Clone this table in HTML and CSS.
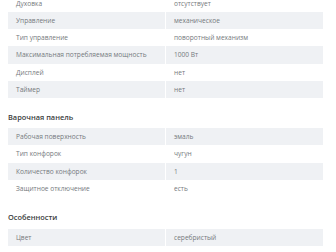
FILE: index.html
```html
<!DOCTYPE html>
<html lang="ru">
<head>
<meta charset="utf-8">
<link rel="stylesheet" href="styles.css">
</head>
<body>
<div class="page">
  <div class="table">
    <div class="row"><div class="k">Духовка</div><div class="v">отсутствует</div></div>
    <div class="row alt"><div class="k">Управление</div><div class="v">механическое</div></div>
    <div class="row"><div class="k">Тип управление</div><div class="v">поворотный механизм</div></div>
    <div class="row alt"><div class="k">Максимальная потребляемая мощность</div><div class="v">1000 Вт</div></div>
    <div class="row"><div class="k">Дисплей</div><div class="v">нет</div></div>
    <div class="row alt"><div class="k">Таймер</div><div class="v">нет</div></div>
  </div>
  <h3 class="title">Варочная панель</h3>
  <div class="table">
    <div class="row alt"><div class="k">Рабочая поверхность</div><div class="v">эмаль</div></div>
    <div class="row"><div class="k">Тип конфорок</div><div class="v">чугун</div></div>
    <div class="row alt"><div class="k">Количество конфорок</div><div class="v">1</div></div>
    <div class="row"><div class="k">Защитное отключение</div><div class="v">есть</div></div>
  </div>
  <h3 class="title second">Особенности</h3>
  <div class="table">
    <div class="row alt"><div class="k">Цвет</div><div class="v">серебристый</div></div>
    <div class="row"><div class="k">&nbsp;</div><div class="v">&nbsp;</div></div>
  </div>
</div>
</body>
</html>
```
FILE: styles.css
```css
html, body {
  margin: 0;
  padding: 0;
  background: #ffffff;
}
body {
  font-family: "Open Sans", "Liberation Sans", sans-serif;
  overflow: hidden;
}
.page {
  margin-top: -5.5px;
  padding-left: 8px;
  width: 315px;
}
.table {
  display: flex;
  flex-direction: column;
}
.row {
  display: grid;
  grid-template-columns: 158px 1fr;
  height: 17.25px;
  align-items: center;
  font-size: 6.6px;
  color: #75797d;
}
.row.alt {
  background: #eff1f4;
}
.k {
  padding-left: 8px;
  border-right: 1px solid #ffffff;
  height: 100%;
  display: flex;
  align-items: center;
}
.v {
  padding-left: 8px;
}
.title {
  margin: 0;
  padding: 13px 0 5px 0;
  font-size: 7.4px;
  line-height: 12px;
  font-weight: 600;
  color: #3a3d40;
}
.title.second {
  padding-top: 14px;
  padding-bottom: 6px;
}
```
